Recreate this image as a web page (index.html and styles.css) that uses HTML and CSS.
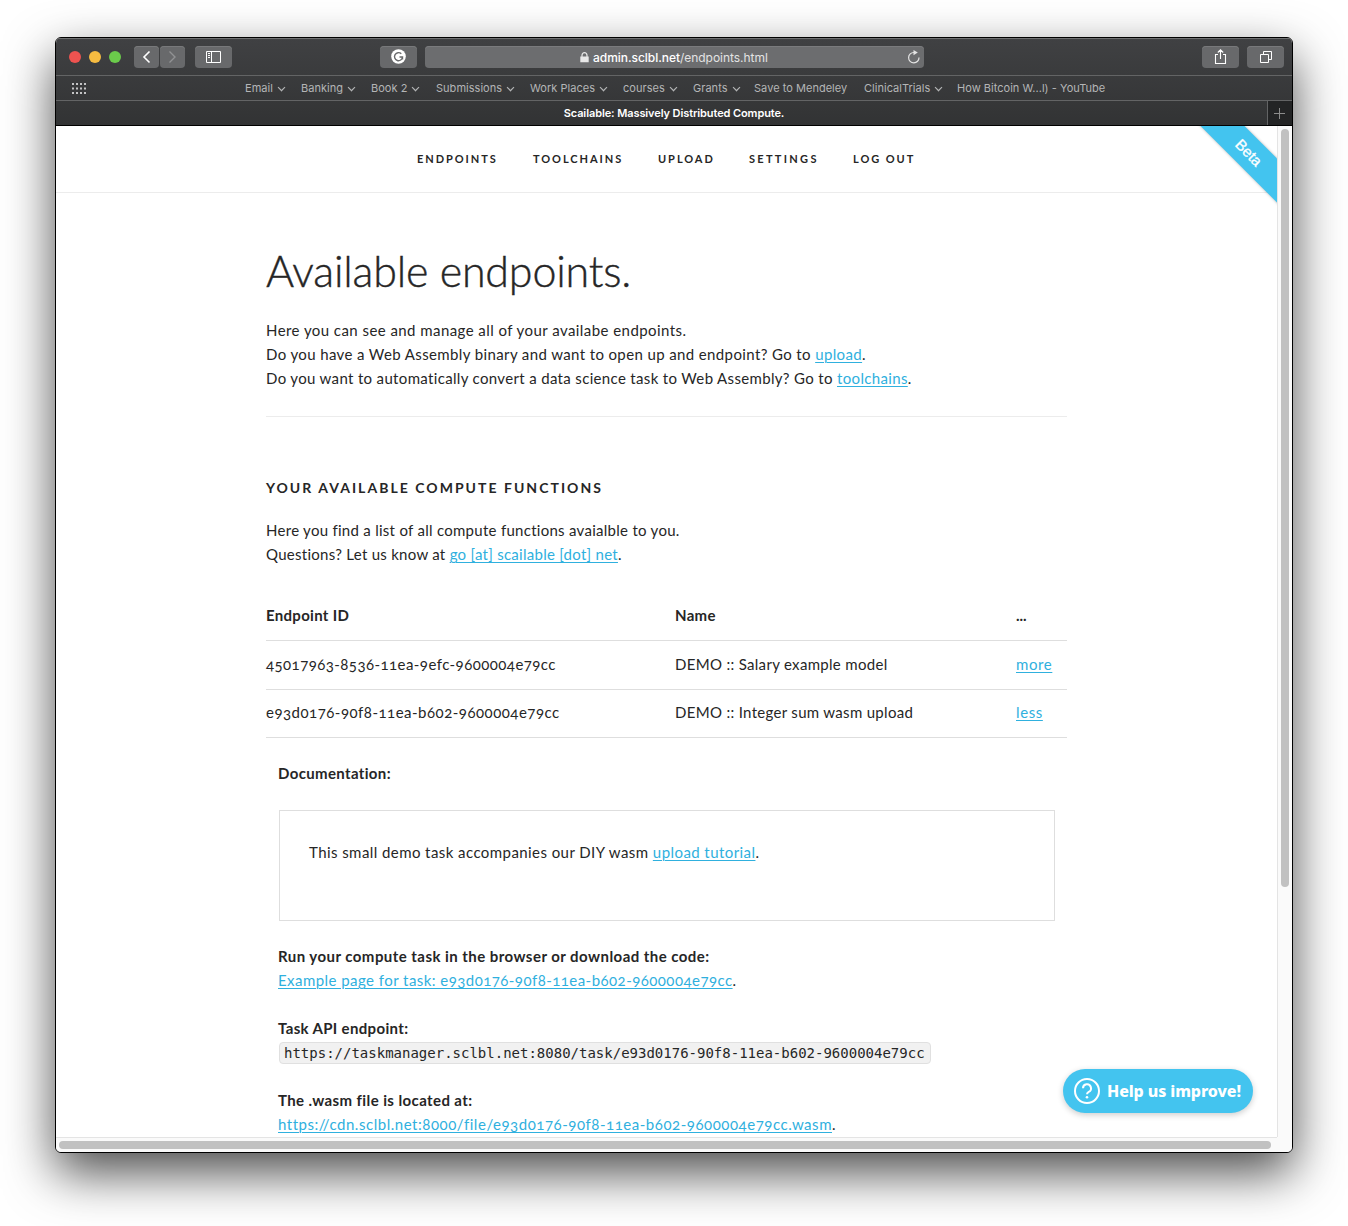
FILE: index.html
```html
<!DOCTYPE html>
<html lang="en">
<head>
<meta charset="utf-8">
<title>Scailable: Massively Distributed Compute.</title>
<link rel="stylesheet" href="styles.css">
</head>
<body>
<div class="window">
  <header class="chrome">
    <div class="toolbar">
      <div class="lights"><i class="light red"></i><i class="light amber"></i><i class="light green"></i></div>
      <div class="history">
        <span class="btn nav-btn"><svg width="25" height="22" viewBox="0 0 25 22"><path d="M15.500 5.500 10 11l5.500 5.500" fill="none" stroke="#fff" stroke-width="1.600"/></svg></span>
        <span class="btn nav-btn"><svg width="25" height="22" viewBox="0 0 25 22"><path d="M9.500 5.500 15 11 9.500 16.500" fill="none" stroke="#919294" stroke-width="1.400"/></svg></span>
      </div>
      <span class="btn"><svg width="37" height="22" viewBox="0 0 37 22"><path d="M11.500 5.500h14v11h-14zM16.500 5.500v11M13 7.500h2M13 9.500h2M13 11.500h2" fill="none" stroke="#fff"/></svg></span>
      <span class="btn grammar"><svg width="37" height="22" viewBox="0 0 37 22"><circle cx="18.500" cy="10.500" r="7.300" fill="#fff"/><path d="M21.300 7.800A4 4 0 1 0 22.500 11H19.500M22.500 11v2.500" fill="none" stroke="#68696b" stroke-width="1.400"/></svg></span>
      <div class="address">
        <svg class="lock" width="9" height="11" viewBox="0 0 9 11"><path d="M0.300 4.600h8.400v5.600H.3z" fill="#e8e8e8"/><path d="M2 5V3.200a2.500 2.500 0 0 1 5 0V5" fill="none" stroke="#e8e8e8" stroke-width="1.200"/></svg>
        <span class="url"><b>admin.sclbl.net</b>/endpoints.html</span>
        <svg class="reload" width="14" height="14" viewBox="0 0 14 14"><path d="M8 2.500A5.200 5.200 0 1 0 13 7.500" fill="none" stroke="#e4e4e4" stroke-width="1.200"/><path d="M7.500 0l4.300 2.600L7.500 5.200z" fill="#e4e4e4"/></svg>
      </div>
      <span class="btn share"><svg width="37" height="22" viewBox="0 0 37 22"><path d="M16 8.500h-2.500v9h10v-9H21M18.500 13V4M15.800 6.500l2.700-2.700 2.700 2.700" fill="none" stroke="#fff" stroke-width="1.100"/></svg></span>
      <span class="btn tabs"><svg width="37" height="22" viewBox="0 0 37 22"><path d="M13.500 8.500h8v8h-8zM16.500 8V5.500h8v8H22" fill="none" stroke="#fff"/></svg></span>
    </div>
    <div class="bookmarks">
      <svg class="dots" width="15" height="11" viewBox="0 0 15 11"><path d="M0 1h15M0 5.500h15M0 10h15" stroke="#c4c4c5" stroke-width="2" stroke-dasharray="2 2" fill="none"/></svg>
      <ul class="bm-list">
        <li>Email<i class="chev"></i></li>
        <li>Banking<i class="chev"></i></li>
        <li>Book 2<i class="chev"></i></li>
        <li>Submissions<i class="chev"></i></li>
        <li>Work Places<i class="chev"></i></li>
        <li>courses<i class="chev"></i></li>
        <li>Grants<i class="chev"></i></li>
        <li>Save to Mendeley</li>
        <li>ClinicalTrials<i class="chev"></i></li>
        <li>How Bitcoin W...l) - YouTube</li>
      </ul>
    </div>
    <div class="tabbar">
      <div class="tab">Scailable: Massively Distributed Compute.</div>
      <div class="newtab"><svg width="11" height="11" viewBox="0 0 11 11"><path d="M5.500 0v11M0 5.500h11" stroke="#8c8c8c"/></svg></div>
    </div>
  </header>
  <div class="body">
    <div class="page">
      <nav class="menu"><a>Endpoints</a><a>Toolchains</a><a>Upload</a><a class="settings">Settings</a><a>Log out</a></nav>
      <main class="content">
        <h1>Available endpoints.</h1>
        <p><span class="t1">Here you can see and manage all of your availabe endpoints.</span><br>
        <span class="t2">Do you have a Web Assembly binary and want to open up and endpoint? Go to <a class="link">upload</a>.</span><br>
        <span class="t3">Do you want to automatically convert a data science task to Web Assembly? Go to <a class="link">toolchains</a>.</span></p>
        <hr>
        <h2>Your available compute functions</h2>
        <p><span class="t4">Here you find a list of all compute functions avaialble to you.</span><br>
        <span class="t5">Questions? Let us know at <a class="link">go [at] scailable [dot] net</a>.</span></p>
        <div class="table">
          <div class="row head"><span>Endpoint ID</span><span>Name</span><span class="more">...</span></div>
          <div class="row"><span class="id1">45017963-8536-11ea-9efc-9600004e79cc</span><span class="n1">DEMO :: Salary example model</span><span><a class="link act">more</a></span></div>
          <div class="row last"><span class="id2">e93d0176-90f8-11ea-b602-9600004e79cc</span><span class="n2">DEMO :: Integer sum wasm upload</span><span><a class="link act">less</a></span></div>
        </div>
        <section class="details">
          <div class="label d1">Documentation:</div>
          <div class="doc"><span class="d2">This small demo task accompanies our DIY wasm <a class="link">upload tutorial</a>.</span></div>
          <div class="label d3">Run your compute task in the browser or download the code:</div>
          <div class="value"><span class="d4"><a class="link">Example page for task: e93d0176-90f8-11ea-b602-9600004e79cc</a>.</span></div>
          <div class="label d5">Task API endpoint:</div>
          <div class="value"><code>https://taskmanager.sclbl.net:8080/task/e93d0176-90f8-11ea-b602-9600004e79cc</code></div>
          <div class="label d6">The .wasm file is located at:</div>
          <div class="value"><span class="d7"><a class="link">https://cdn.sclbl.net:8000/file/e93d0176-90f8-11ea-b602-9600004e79cc.wasm</a>.</span></div>
        </section>
      </main>
      <div class="ribbon"><span>Beta</span></div>
      <div class="help"><svg width="26" height="26" viewBox="0 0 26 26"><circle cx="13" cy="13" r="12" fill="none" stroke="#fff" stroke-width="2"/><path d="M9 10.300a4 4 0 1 1 5.700 3.600Q13 14.800 13 16.300" fill="none" stroke="#fff" stroke-width="2"/><circle cx="13" cy="19.300" r="1.300" fill="#fff"/></svg><span>Help us improve!</span></div>
    </div>
    <div class="vscroll"><i></i></div>
    <div class="hscroll"><i></i></div>
  </div>
</div>
</body>
</html>
```
FILE: styles.css
```css
* { box-sizing: border-box; }
html, body { height: 100%; }
body { margin: 0; padding: 37px 55px 0; background: #fff; overflow: hidden; }
i { font-style: normal; }
svg { display: block; }

.window { width: 1238px; height: 1116px; border: 1px solid #000; border-radius: 6px; overflow: hidden; background: #fff; box-shadow: 0 20px 50px rgba(0, 0, 0, .7); display: flex; flex-direction: column; }

.chrome { height: 88px; flex: none; background: linear-gradient(#404143, #323334); border-bottom: 1px solid #000; box-shadow: inset 0 1px #6f7071; font-family: Inter, "Liberation Sans", sans-serif; }
.toolbar { height: 37px; display: flex; align-items: center; padding: 1px 8px 0 13px; }
.lights { display: flex; gap: 8px; width: 65px; }
.light { width: 12px; height: 12px; border-radius: 50%; }
.red { background: #ee5350; }
.amber { background: #f6bc41; }
.green { background: #6bcb4b; }
.history { display: flex; gap: 1px; margin-right: 10px; }
.btn { width: 37px; height: 22px; border-radius: 4px; background: #68696b; box-shadow: inset 0 1px #78797b; }
.nav-btn { width: 25px; }
.grammar { margin: 0 8px 0 148px; }
.address { width: 499px; height: 22px; border-radius: 4px; background: #6c6d6f; box-shadow: inset 0 1px #7a7b7d; display: flex; align-items: center; padding: 0 4px 0 155px; }
.url { margin-left: 4px; padding-top: 2px; font-size: 12px; line-height: 20px; color: #e3e3e3; letter-spacing: -.04px; flex: 1; white-space: nowrap; }
.url b { font-weight: 500; color: #fff; }
.share { margin: 0 8px 0 278px; }

.bookmarks { height: 25px; border-top: 1px solid #636465; display: flex; align-items: center; padding-left: 16px; }
.bm-list { list-style: none; margin: 0 0 0 158px; padding: 0; display: grid; grid-template-columns: 56px 70px 65px 94px 93px 70px 61px 110px 93px 150px; font-size: 11px; color: #b4b5b6; letter-spacing: .03px; line-height: 24px; white-space: nowrap; }
.bm-list li { display: flex; align-items: center; }
.chev { width: 5px; height: 5px; border: solid #b4b5b6; border-width: 0 1.5px 1.5px 0; transform: rotate(45deg) scale(1.1); margin: -2px 0 0 6px; }
.tabbar { height: 25px; border-top: 1px solid #636465; display: flex; }
.tab { flex: 1; padding-left: 25px; text-align: center; color: #fff; font-size: 11px; font-weight: 600; line-height: 24px; letter-spacing: -.1px; }
.newtab { width: 25px; background: #232425; border-left: 1px solid #636465; padding: 7px 6px; }

.body { flex: 1; display: grid; grid-template: 1011px 15px / 1221px 15px; background: #fafafa; }
.page { position: relative; overflow: hidden; background: #fff; color: #262626; font: 15px/24px Lato, sans-serif; font-variant-numeric: oldstyle-nums; white-space: nowrap; }
.vscroll { border-left: 1px solid #e4e4e4; padding: 3px; }
.vscroll i { display: block; width: 8px; height: 758px; border-radius: 4px; background: #c1c1c1; }
.hscroll { border-top: 1px solid #e4e4e4; padding: 3px; }
.hscroll i { display: block; width: 1212px; height: 8px; border-radius: 4px; background: #c1c1c1; }

.menu { height: 67px; border-bottom: 1px solid #ececec; display: grid; grid-template-columns: 116px 125px 91px 104px 80px; padding-left: 361px; font-size: 11px; font-weight: 700; letter-spacing: 1.95px; text-transform: uppercase; line-height: 66px; }
.settings { letter-spacing: 2.3px; }
.content { width: 801px; margin-left: 210px; padding-top: 53px; }
h1 { margin: 0 0 22px; font-size: 43px; font-weight: 300; line-height: 50px; letter-spacing: -.2px; -webkit-text-stroke: .4px #262626; }
p { margin: 0; }
.link { color: #2fb0de; text-decoration: underline; text-decoration-thickness: 1px; text-underline-offset: 2px; }
hr { border: 0; height: 1px; background: #ececec; margin: 26px 0 59px; }
h2 { margin: 0 0 18px; font-size: 14px; font-weight: 700; line-height: 24px; letter-spacing: 2.03px; text-transform: uppercase; }
.table { margin-top: 26px; }
.row { display: grid; grid-template-columns: 409px 341px 51px; height: 49px; line-height: 46px; border-bottom: 1px solid #dedede; }
.last { height: 48px; line-height: 45px; }
.head, .label { font-weight: 700; }
.details { padding: 23px 12px 0; }
.doc { margin: 25px 0 23px 1px; height: 111px; width: 776px; border: 1px solid #dedede; padding: 29px; }
.value { height: 24px; margin-bottom: 24px; }
code { display: inline-block; vertical-align: top; margin: 2px 0 0 1px; height: 22px; padding: 0 5px 0 4px; border: 1px solid #e0e0e0; border-radius: 4px; background: #f1f1f1; font: 14px/20px "DejaVu Sans Mono", monospace; font-variant-numeric: normal; }

/* Tracking per line of text */
.t1 { letter-spacing: .44px; }
.t2 { letter-spacing: .38px; }
.t3 { letter-spacing: .34px; }
.t4 { letter-spacing: .28px; }
.t5 { letter-spacing: .27px; }
.head { letter-spacing: .3px; }
.more { letter-spacing: 0; }
.id1 { letter-spacing: .44px; }
.id2 { letter-spacing: .49px; }
.n1, .n2 { letter-spacing: .31px; }
.act { letter-spacing: .6px; }
.d1 { letter-spacing: .35px; }
.d2 { letter-spacing: .43px; }
.d3, .d4 { letter-spacing: .45px; }
.d5 { letter-spacing: .34px; }
.d6 { letter-spacing: .4px; }
.d7 { letter-spacing: .53px; }

.ribbon { position: absolute; top: 0; right: 0; width: 80px; height: 80px; overflow: hidden; }
.ribbon span { position: absolute; left: -23px; top: 11px; width: 150px; height: 31px; transform: rotate(45deg); background: #43c4ef; box-shadow: 0 0 3px rgba(0, 0, 0, .3); color: #fff; text-align: center; font: 15px/32px "Liberation Sans", sans-serif; -webkit-text-stroke: .3px #fff; }
.help { position: absolute; left: 1007px; top: 943px; width: 190px; height: 44px; border-radius: 22px; background: #43c4ef; box-shadow: 0 2px 6px rgba(0, 0, 0, .2); display: flex; align-items: center; gap: 7px; padding-left: 11px; color: #fff; font: 800 16px/44px "Noto Sans", "Open Sans", sans-serif; letter-spacing: -.1px; }
```
